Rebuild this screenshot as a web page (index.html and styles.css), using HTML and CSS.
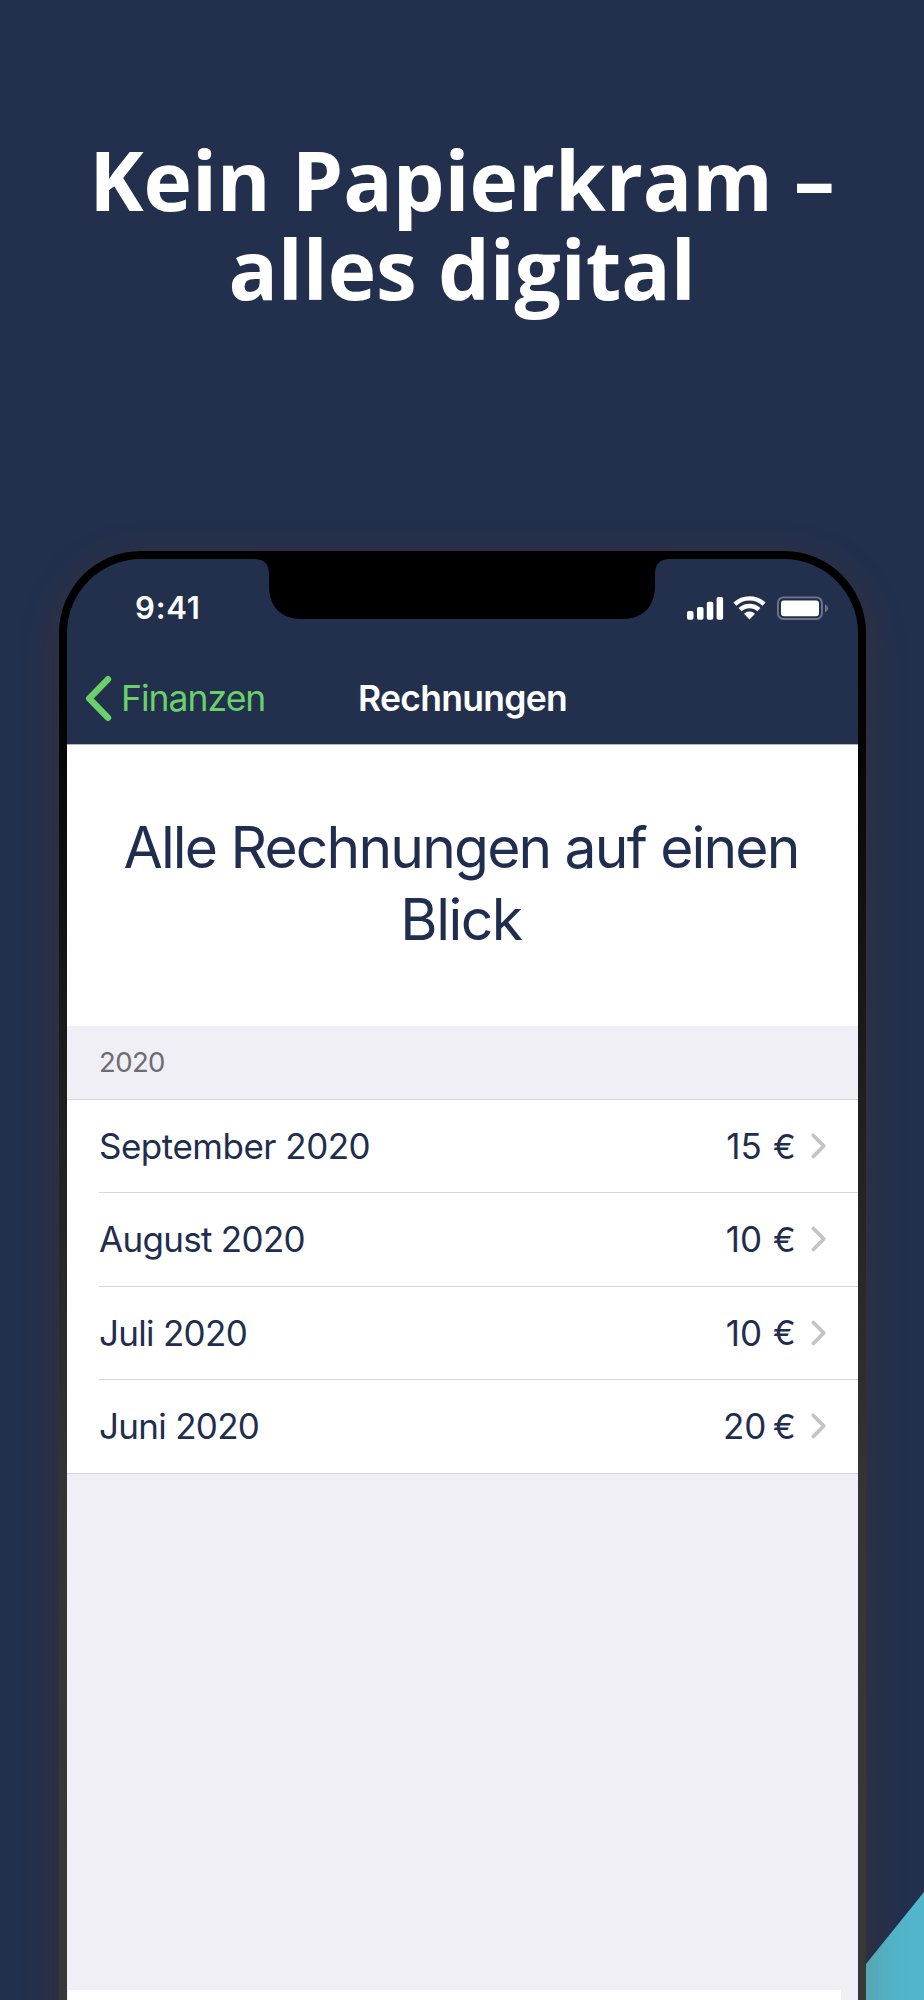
FILE: index.html
```html
<!DOCTYPE html>
<html lang="de">
<head>
<meta charset="utf-8">
<title>Kein Papierkram – alles digital</title>
<link rel="stylesheet" href="styles.css">
</head>
<body>
<main class="poster">
  <h1 class="headline">Kein Papierkram –<br>alles digital</h1>
  <div class="accent"></div>
  <section class="phone">
    <div class="screen">
      <svg class="notch" width="416" height="61" viewBox="0 0 416 61"><path d="M0 0H416V1C406 1 401 6 401 16V27C401 49 389 61 368 61H48C27 61 15 49 15 27V16C15 6 10 1 0 1Z"/></svg>
      <header class="top">
        <div class="status">
          <span class="time">9:41</span>
          <svg class="indicators" width="142" height="26" viewBox="687 594 142 26">
            <g fill="#fff">
              <rect x="687" y="610" width="6.5" height="8.7" rx="1.8"/>
              <rect x="697" y="606" width="6.5" height="12.7" rx="1.8"/>
              <rect x="706.8" y="600.8" width="6.5" height="17.9" rx="1.8"/>
              <rect x="716.6" y="596" width="6.5" height="22.7" rx="1.8"/>
              <path d="M749.5 618.5L744 612.8A8 8 0 0 1 755 612.8Z"/>
            </g>
            <g fill="none" stroke="#fff" stroke-width="4.4">
              <path d="M740.1 608.7A13.6 13.6 0 0 1 758.9 608.7"/>
              <path d="M734.9 603.2A21.1 21.1 0 0 1 764.1 603.2"/>
            </g>
            <rect x="777.9" y="596.4" width="44" height="21.6" rx="5.5" fill="none" stroke="#6c778b" stroke-width="1.9"/>
            <rect x="781" y="599.4" width="38" height="15.8" rx="3" fill="#fff"/>
            <path d="M825 603.2Q828 604.5 828 607.2Q828 610 825 611.3Z" fill="#6c778b"/>
          </svg>
        </div>
        <nav class="nav">
          <a class="back">
            <svg width="28" height="48" viewBox="0 0 28 48"><path d="M24 5.2L5.2 24.5L24 43.8" fill="none" stroke="#6ad069" stroke-width="6.4" stroke-linecap="round" stroke-linejoin="round"/></svg>
            <span>Finanzen</span>
          </a>
          <span class="title">Rechnungen</span>
        </nav>
      </header>
      <h2 class="intro">Alle Rechnungen auf einen<br><span class="short">Blick</span></h2>
      <h3 class="year">2020</h3>
      <ul class="list">
        <li class="row"><span class="month sep">September 2020</span><span class="amount">15</span><span class="euro">€</span><svg class="chev" width="17" height="28" viewBox="0 0 17 28"><path d="M3.3 3.5L13.8 14L3.3 24.5"/></svg></li>
        <li class="row"><span class="month">August 2020</span><span class="amount">10</span><span class="euro">€</span><svg class="chev" width="17" height="28" viewBox="0 0 17 28"><path d="M3.3 3.5L13.8 14L3.3 24.5"/></svg></li>
        <li class="row"><span class="month">Juli 2020</span><span class="amount">10</span><span class="euro">€</span><svg class="chev" width="17" height="28" viewBox="0 0 17 28"><path d="M3.3 3.5L13.8 14L3.3 24.5"/></svg></li>
        <li class="row"><span class="month">Juni 2020</span><span class="amount">20</span><span class="euro">€</span><svg class="chev" width="17" height="28" viewBox="0 0 17 28"><path d="M3.3 3.5L13.8 14L3.3 24.5"/></svg></li>
      </ul>
      <div class="rest"></div>
      <div class="tail"><div class="sheet"></div></div>
    </div>
  </section>
</main>
</body>
</html>
```
FILE: styles.css
```css
body { margin: 0; background: #22304d; }
.poster {
  position: relative;
  box-sizing: border-box;
  width: 924px;
  height: 2000px;
  padding-top: 134.5px;
  overflow: hidden;
  background: #22304d;
  font-family: Inter, "Liberation Sans", sans-serif;
}
.headline {
  height: 416.5px;
  margin: 0;
  text-align: center;
  color: #fff;
  font: 700 82px/89.5px "Open Sans", sans-serif;
  letter-spacing: -0.1px;
}
.accent {
  position: absolute;
  right: 0;
  bottom: 0;
  width: 87px;
  height: 108px;
  background: #52b5ca;
  clip-path: polygon(100% 0, 100% 100%, 0 100%);
}
.phone {
  position: relative;
  box-sizing: border-box;
  width: 807px;
  height: 1600px;
  margin-left: 59px;
  padding: 8px;
  border-radius: 82px;
  background: linear-gradient(#000 0, #000 120px, #1a1a1a 470px, #272727 700px, #343434 940px, #383838 1300px);
  box-shadow: 0 10px 40px rgba(140, 50, 0, 0.24);
}
.screen {
  position: relative;
  height: 1500px;
  border-radius: 74px 74px 0 0;
  overflow: hidden;
}
.notch { position: absolute; left: 187px; top: -1px; }
.top {
  box-sizing: border-box;
  height: 186px;
  background: #22304d;
  border-bottom: 1px solid #b0b4bd;
}
.status {
  display: flex;
  justify-content: space-between;
  align-items: center;
  height: 98px;
  padding: 0 29px 0 68px;
}
.time { color: #fff; font-size: 31px; font-weight: 600; line-height: 40px; letter-spacing: 0.8px; }
.nav {
  display: grid;
  grid-template-columns: 1fr auto 1fr;
  align-items: center;
  height: 82px;
}
.back {
  display: flex;
  align-items: center;
  gap: 9px;
  padding-left: 17px;
  color: #6ad069;
  font-size: 35.5px;
  letter-spacing: -0.98px;
}
.title { color: #fff; font-size: 35.5px; font-weight: 600; letter-spacing: -0.72px; }
.intro {
  box-sizing: border-box;
  height: 281px;
  margin: 0;
  padding: 67px 3px 0 0;
  background: #fff;
  color: #1f2e4e;
  text-align: center;
  font-size: 57px;
  font-weight: 400;
  line-height: 72px;
  letter-spacing: -1.83px;
}
.short { letter-spacing: -1.5px; }
.year {
  box-sizing: border-box;
  height: 74px;
  margin: 0;
  padding-left: 32px;
  background: #f0eff5;
  border-bottom: 1px solid #d6d5da;
  color: #6d6c72;
  font-size: 27.5px;
  font-weight: 400;
  line-height: 72px;
  letter-spacing: -0.6px;
}
.list { margin: 0; padding: 0 0 0 32px; list-style: none; background: #fff; border-bottom: 1px solid #d6d6d9; }
.row {
  display: flex;
  align-items: center;
  box-sizing: border-box;
  height: 93.5px;
  padding-right: 31px;
  color: #1f2e4e;
  font-size: 35px;
  letter-spacing: -0.7px;
}
.row:first-child { height: 92px; }
.row + .row { border-top: 1px solid #d8d8da; }
.month { flex: 1; }
.sep { letter-spacing: -0.5px; }
.amount { width: 42px; text-align: center; letter-spacing: 0; }
.euro { width: 21px; margin-left: 8px; font-size: 34px; letter-spacing: 0; }
.chev { margin-left: 16px; fill: none; stroke: #c4c4c7; stroke-width: 3.8; stroke-linecap: round; stroke-linejoin: round; }
.rest { height: 516.5px; background: #f0eff5; }
.tail { padding: 0 17px 0 1px; background: #f0eff5; }
.sheet { height: 60px; background: #fff; }
```
